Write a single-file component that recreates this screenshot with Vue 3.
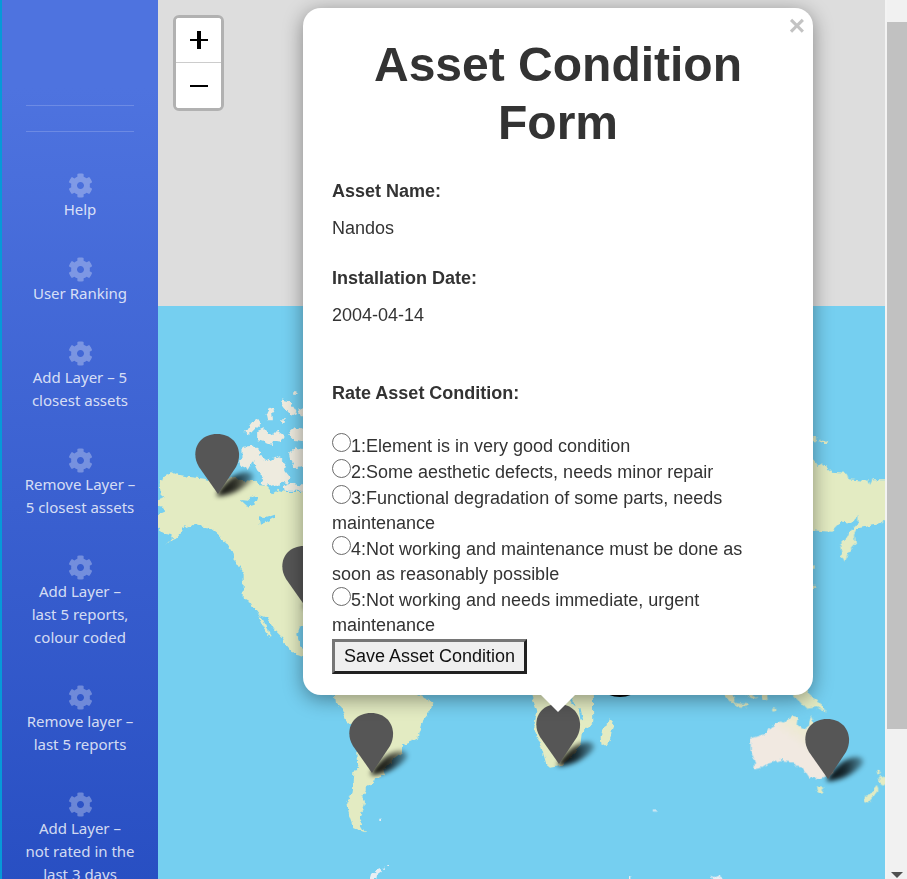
<script setup>
import { ref } from 'vue'

const menu = [
  'Help',
  'User Ranking',
  'Add Layer – 5\nclosest assets',
  'Remove Layer –\n5 closest assets',
  'Add Layer –\nlast 5 reports,\ncolour coded',
  'Remove layer –\nlast 5 reports',
  'Add Layer –\nnot rated in the\nlast 3 days'
]

const conditions = [
  'Element is in very good condition',
  'Some aesthetic defects, needs minor repair',
  'Functional degradation of some parts, needs maintenance',
  'Not working and maintenance must be done as soon as reasonably possible',
  'Not working and needs immediate, urgent maintenance'
]

const pins = [
  { x: 217, y: 456 },
  { x: 304, y: 568 },
  { x: 371, y: 735 },
  { x: 558, y: 726 },
  { x: 827, y: 741 }
]

const rating = ref(null)
</script>

<template>
  <div class="page">
    <nav class="sidebar">
      <hr class="rule">
      <hr class="rule">
      <a v-for="item in menu" :key="item" class="item" href="#">
        <svg class="cog" viewBox="0 0 512 512" aria-hidden="true">
          <path d="M487.4 315.7l-42.6-24.6c4.3-23.2 4.3-47 0-70.2l42.6-24.6c4.9-2.8 7.1-8.6 5.5-14-11.1-35.6-30-67.8-54.7-94.6-3.8-4.1-10-5.1-14.8-2.3L380.8 110c-17.9-15.4-38.5-27.3-60.8-35.1V25.8c0-5.6-3.9-10.5-9.4-11.7-36.7-8.2-74.3-7.8-109.2 0-5.5 1.2-9.4 6.1-9.4 11.7V75c-22.2 7.9-42.8 19.8-60.8 35.1L88.7 85.5c-4.9-2.8-11-1.9-14.8 2.3-24.7 26.7-43.6 58.9-54.7 94.6-1.7 5.4.6 11.2 5.5 14L67.3 221c-4.3 23.2-4.3 47 0 70.2l-42.6 24.6c-4.9 2.8-7.1 8.6-5.5 14 11.1 35.6 30 67.8 54.7 94.6 3.8 4.1 10 5.1 14.8 2.3l42.6-24.6c17.9 15.4 38.5 27.3 60.8 35.1v49.2c0 5.6 3.9 10.5 9.4 11.7 36.7 8.2 74.3 7.8 109.2 0 5.5-1.2 9.4-6.1 9.4-11.7v-49.2c22.2-7.9 42.8-19.8 60.8-35.1l42.6 24.6c4.9 2.8 11 1.9 14.8-2.3 24.7-26.7 43.6-58.9 54.7-94.6 1.5-5.5-.7-11.3-5.6-14.1zM256 328c-40 0-72-32-72-72s32-72 72-72 72 32 72 72-32 72-72 72z" />
        </svg>
        <span>{{ item }}</span>
      </a>
    </nav>

    <main class="map">
      <svg class="world" viewBox="158 0 727 879" preserveAspectRatio="xMinYMin slice" aria-hidden="true">
        <defs>
          <filter id="coast" x="-5%" y="-5%" width="110%" height="110%">
            <feTurbulence type="fractalNoise" baseFrequency="0.2" numOctaves="2" seed="4" />
            <feDisplacementMap in="SourceGraphic" scale="5" xChannelSelector="R" yChannelSelector="G" />
          </filter>
          <filter id="soft" x="-50%" y="-100%" width="200%" height="300%">
            <feGaussianBlur stdDeviation="2.6" />
          </filter>
          <linearGradient id="shade" x1="0" x2="1" y1="0" y2="0">
            <stop offset="0" stop-color="#000" stop-opacity=".95" />
            <stop offset=".5" stop-color="#000" stop-opacity=".8" />
            <stop offset="1" stop-color="#000" stop-opacity=".3" />
          </linearGradient>
          <linearGradient id="outback" x1="0" x2="1" y1="1" y2="0">
            <stop offset=".55" stop-color="#f1e9e1" />
            <stop offset=".8" stop-color="#ebebc8" />
          </linearGradient>
        </defs>
        <rect x="158" y="306" width="1600" height="1600" fill="#75cff0" />
        <g filter="url(#coast)" fill="#e3ebc2">
          <!-- North America -->
          <g transform="translate(158 380) scale(.3333)">
            <path d="M5 312L12 292 30 285 42 272 60 284 90 290 140 296 175 310 200 300 235 290 245 300 285 302 300 315 325 318 345 340 360 330 385 336 440 336 440 830 420 824 400 815 382 795 375 775 345 745 325 712 305 705 290 685 275 665 257 655 257 580 238 550 228 540 222 515 205 490 190 478 180 460 160 445 135 440 110 432 95 445 80 435 70 455 50 478 25 495 45 475 40 462 15 458 -6 440 -6 405 18 395 15 380 -6 375 -6 362 20 355 8 345Z" />
            <path d="M300 706L312 712 325 740 341 768 336 771 318 745Z" />
            <g fill="#eeebdf" stroke="#eeebdf" stroke-width="5">
              <path d="M256 203L285 200 304 213 300 228 280 245 268 266 250 258 246 246 256 235Z" />
              <path d="M290 232L312 228 322 246 345 240 362 232 380 250 376 270 392 290 388 308 370 302 360 318 342 310 322 318 310 305 322 290 300 270 294 258Z" />
              <path d="M265 155L282 130 300 120 306 130 288 146 272 162Z" />
              <path d="M300 155L316 148 328 162 346 168 358 155 374 168 366 182 345 180 340 192 318 184 300 178Z" />
              <path d="M372 62L390 66 404 82 414 98 402 104 388 90 376 76Z" />
              <path d="M328 100L336 86 346 90 340 98 342 118 332 118Z" />
              <path d="M394 160L412 144 440 150 440 182 410 178Z" />
              <path d="M396 222L412 206 440 210 440 258 412 262 400 240Z" />
              <path d="M424 90L440 82 440 106 430 106ZM408 36h8v6h-8ZM372 120h6v6h-6ZM380 318l20 -8 24 12 16 -8v16h-58Z" />
            </g>
            <path fill="#75cff0" d="M248 360L270 362 285 346 298 352 290 374 270 380ZM302 412L322 414 350 404 354 410 330 424 306 434ZM440 732L426 740 418 762 424 790 440 806Z" />
          </g>
          <!-- South America and southern Africa -->
          <g transform="translate(300 640) scale(.3333)">
            <path d="M100 130L108 190 125 205 138 240 155 255 170 310 175 380 160 400 155 460 142 490 148 530 160 565 195 577 185 560 178 545 190 510 195 490 190 470 200 440 220 430 225 415 255 405 250 390 280 360 305 340 310 315 355 295 370 240 390 215 400 190 385 178 350 165 340 130Z" />
            <path d="M680 130L712 215 700 265 722 315 740 375 750 383 780 378 815 350 845 310 850 270 880 250 878 130Z" />
            <path d="M929 238L940 250 930 300 920 315 905 318 902 290 908 262 925 250Z" />
            <path d="M-12 18L12 24 12 50 -12 44Z" />
            <path fill="none" stroke="#75cff0" stroke-width="7" d="M810 172L825 200M838 205L846 240" />
            <path fill="#e9eef3" d="M212 717L216 702 238 684 246 692 228 706 226 717ZM250 683h7v6h-7ZM262 675h7v6h-7ZM238 536h8v7h-8Z" />
          </g>
          <!-- Australia, New Guinea, New Zealand -->
          <g transform="translate(600 640) scale(.3333)">
            <path fill="url(#outback)" d="M452 295L500 280 510 262 540 245 555 248 575 228 592 235 590 255 625 268 632 230 645 260 650 290 700 330 700 400 660 415 625 412 605 382 590 380 580 365 540 360 500 372 480 385 462 388 465 370 452 330Z" />
            <path stroke="#e3ebc2" stroke-width="3" d="M560 145L600 185 620 205 650 200 675 214 660 190 640 175 610 145ZM365 150L385 178 398 192 402 180 392 150ZM398 188L416 192 442 194 440 199 415 198ZM430 155L445 155 470 174 455 172ZM484 160L492 180 502 176 498 160ZM518 207h6v6h-6Z" />
            <path stroke="#e3ebc2" stroke-width="3" d="M650 442L668 445 664 457 652 454ZM793 470L812 462 830 440 834 450 820 468 805 486 793 482ZM838 412L850 408 870 420 850 436 840 430ZM832 392h6v6h-6Z" />
            <path fill="#e9eef3" d="M332 703L342 712 356 706 372 717 336 720ZM162 508h6v7h-6ZM88 710h6v8h-6Z" />
          </g>
          <!-- Eastern Siberia -->
          <g transform="translate(780 420) scale(.3333)">
            <path d="M80 122L104 122 115 138 125 130 155 155 200 158 205 178 250 182 265 178 270 195 278 178 340 178 340 290 285 315 250 322 232 325 222 345 225 375 205 400 195 425 186 410 180 375 195 360 205 340 235 310 235 288 215 308 185 305 155 335 80 330Z" />
            <path d="M118 58L132 66 145 62 142 72 126 72ZM96 48h12v16h-12ZM96 436h8v10h-8ZM98 494h10v10h-10Z" />
          </g>
        </g>
        <g v-for="pin in pins" :key="pin.x" :transform="`translate(${pin.x} ${pin.y})`">
          <path d="M0 38C6 28 16 17 30 16C38 17 38 22 32 27C24 34 12 40 0 40Z" fill="url(#shade)" filter="url(#soft)" />
          <path d="M1 38L-18 11C-27 -4 -19 -22 0 -22C19 -22 27 -4 19 11Z" fill="#565656" />
        </g>
        <ellipse cx="620" cy="690" rx="15" ry="7" fill="#000" />
      </svg>

      <div class="zoom">
        <button type="button" aria-label="Zoom in">
          <svg viewBox="0 0 18 18" aria-hidden="true"><path d="M0 8h7V0h4v8h7v2h-7v8H7v-8H0z" /></svg>
        </button>
        <button type="button" aria-label="Zoom out">
          <svg viewBox="0 0 18 18" aria-hidden="true"><path d="M0 8h18v2H0z" /></svg>
        </button>
      </div>

      <form class="popup" @submit.prevent>
        <button class="close" type="button" aria-label="Close popup">×</button>
        <h1>Asset Condition Form</h1>
        <dl>
          <dt>Asset Name:</dt>
          <dd>Nandos</dd>
          <dt>Installation Date:</dt>
          <dd>2004-04-14</dd>
        </dl>
        <fieldset>
          <legend>Rate Asset Condition:</legend>
          <label v-for="(text, i) in conditions" :key="i">
            <input v-model="rating" type="radio" name="condition" :value="i + 1">{{ i + 1 }}:{{ text }}
          </label>
        </fieldset>
        <button class="save" type="submit">Save Asset Condition</button>
      </form>
    </main>

    <div class="scroll" aria-hidden="true">
      <div class="thumb"></div>
      <svg viewBox="0 0 12 6"><path d="M0 0h12L6 6z" /></svg>
    </div>
  </div>
</template>

<style>
body {
  overflow: hidden;
}
</style>

<style scoped>
.page {
  display: flex;
  height: 100vh;
  overflow: hidden;
  font-family: "Liberation Sans", Arial, sans-serif;
}

.sidebar {
  box-sizing: border-box;
  flex: 0 0 158px;
  padding-top: 105px;
  overflow: hidden;
  border-left: 2px solid #069ad8;
  background: linear-gradient(180deg, #4e73df 10%, #264dc1 105%);
}

.rule {
  height: 1px;
  margin: 0 24px 25px;
  border: 0;
  background: rgba(255, 255, 255, 0.18);
}

.item {
  display: flex;
  flex-direction: column;
  align-items: center;
  margin-bottom: 36px;
  color: rgba(255, 255, 255, 0.8);
  font: 15px/23px "Noto Sans", "Open Sans", sans-serif;
  text-align: center;
  text-decoration: none;
  white-space: pre;
}

.rule + .item {
  margin-top: 41px;
}

.cog {
  width: 25px;
  height: 25px;
  fill: rgba(255, 255, 255, 0.3);
}

.map {
  position: relative;
  flex: 1;
  min-width: 0;
  overflow: hidden;
  background: #ddd;
}

.world {
  display: block;
  width: 100%;
  height: 100%;
}

.zoom {
  position: absolute;
  top: 15px;
  left: 15px;
  display: flex;
  flex-direction: column;
  overflow: hidden;
  border: 3px solid #b1b1b1;
  border-radius: 6px;
  background: #fff;
}

.zoom button {
  display: grid;
  place-items: center;
  box-sizing: border-box;
  width: 45px;
  height: 45px;
  padding: 0;
  border: 0;
  background: #fff;
}

.zoom button:first-child {
  border-bottom: 1px solid #ccc;
}

.zoom svg {
  width: 18px;
  height: 18px;
}

.popup {
  position: absolute;
  top: 8px;
  left: 145px;
  box-sizing: border-box;
  width: 510px;
  padding: 28px 29px 21px;
  border-radius: 18px;
  background: #fff;
  box-shadow: 0 4px 20px rgba(0, 0, 0, 0.4);
  color: #333;
  font-size: 18px;
  line-height: 25px;
}

.popup::after {
  content: "";
  position: absolute;
  top: 100%;
  left: 50%;
  margin-left: -17px;
  border: 17px solid transparent;
  border-top-color: #fff;
  border-bottom: 0;
}

.close {
  position: absolute;
  top: 5px;
  right: 3px;
  width: 26px;
  height: 26px;
  padding: 0;
  border: 0;
  background: none;
  color: #c3c3c3;
  font: bold 28px/26px "Liberation Sans", Arial, sans-serif;
}

h1 {
  margin: 0 0 27px;
  font-size: 48px;
  line-height: 58px;
  text-align: center;
}

dl {
  margin: 0 0 53px;
}

dt {
  margin-bottom: 12px;
  font-weight: bold;
}

dd {
  margin: 0;
}

dd + dt {
  margin-top: 25px;
}

fieldset {
  min-width: 0;
  margin: 0;
  padding: 0;
  border: 0;
}

legend {
  margin-bottom: 27px;
  padding: 0;
  font-weight: bold;
}

label {
  display: block;
}

input {
  appearance: none;
  box-sizing: border-box;
  width: 19px;
  height: 19px;
  margin: 0;
  border: 1px solid #6b6b6b;
  border-radius: 50%;
  background: #fff;
  vertical-align: 0;
}

input:checked {
  border-width: 6px;
}

.save {
  display: block;
  height: 35px;
  margin-top: 1px;
  padding: 0 9px;
  border: 3px solid;
  border-color: #767676 #212121 #212121 #767676;
  background: #efefef;
  color: #111;
  font: 18px/27px "Liberation Sans", Arial, sans-serif;
}

.scroll {
  display: flex;
  flex: 0 0 20px;
  flex-direction: column;
  justify-content: space-between;
  align-items: center;
  padding: 22px 0 1px;
  border-left: 2px solid #f3f3f3;
  background: #f1f1f1;
}

.thumb {
  flex: 0 0 82.6%;
  width: 100%;
  background: #c1c1c1;
}

.scroll svg {
  width: 12px;
  height: 6px;
  fill: #505050;
}
</style>
